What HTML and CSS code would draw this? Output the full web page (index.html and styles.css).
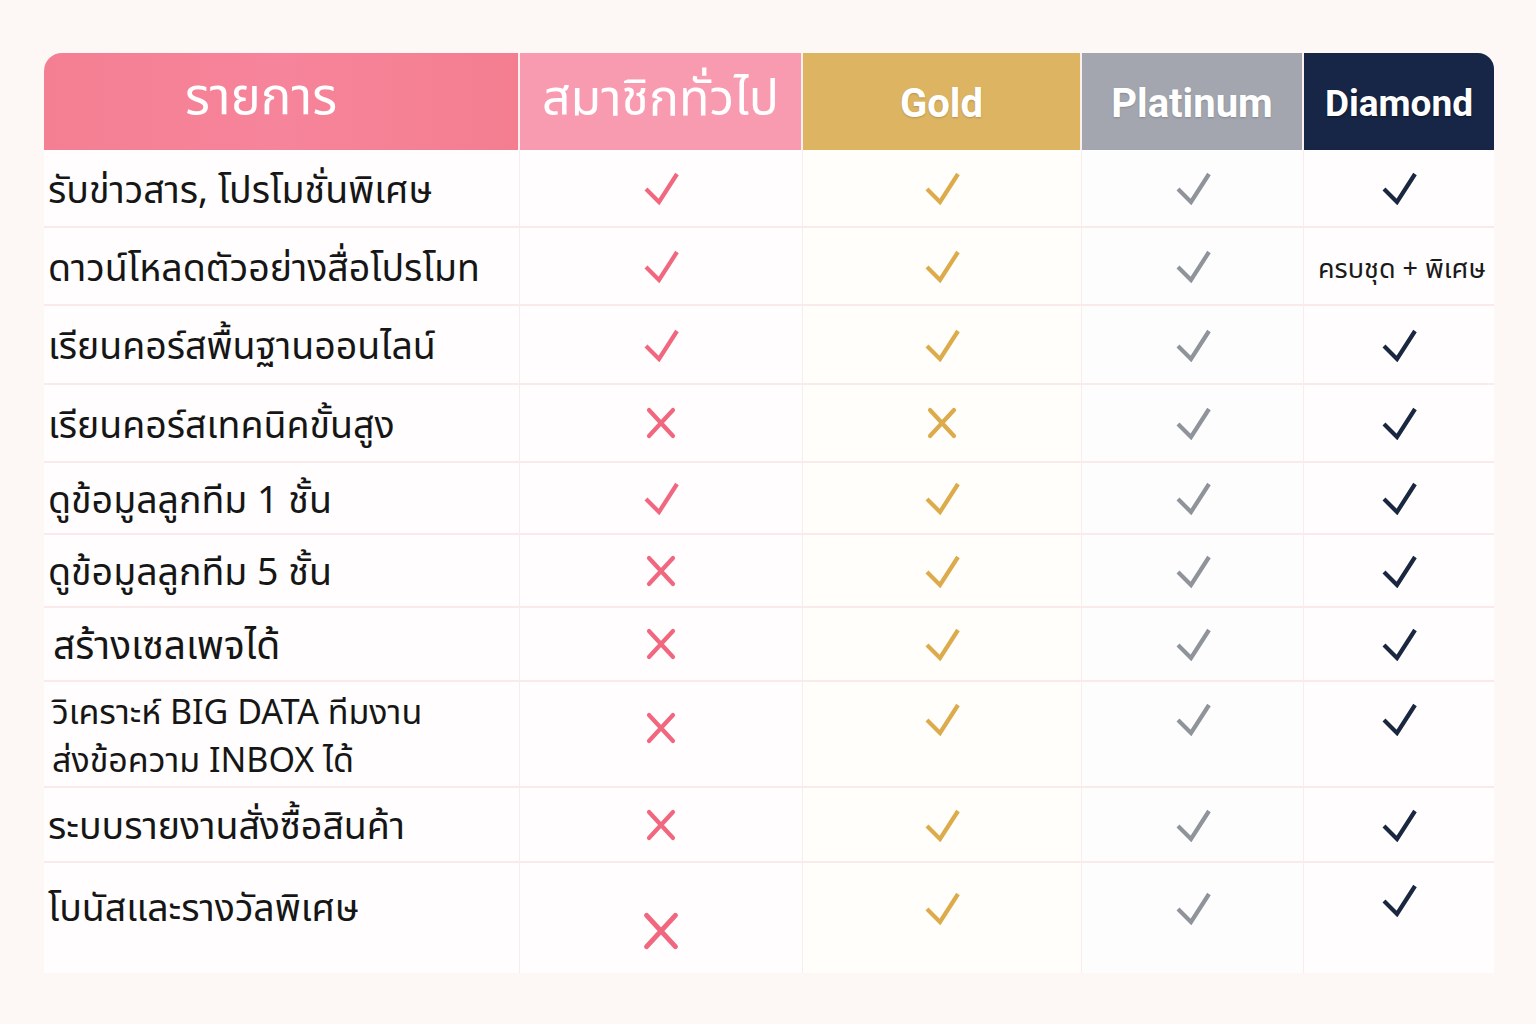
FILE: index.html
```html
<!DOCTYPE html>
<html lang="th">
<head>
<meta charset="utf-8">
<title>ตารางเปรียบเทียบสมาชิก</title>
<link rel="stylesheet" href="styles.css">
</head>
<body>
<svg width="0" height="0" class="defs">
  <defs>
    <symbol id="chk" viewBox="0 0 36 34"><path d="M3 18 L16 31 L34 3" fill="none" stroke="currentColor" stroke-width="4.2" stroke-linejoin="miter"/></symbol>
    <symbol id="crs" viewBox="0 0 30 32"><path d="M3 3 L27 29 M27 3 L3 29" fill="none" stroke="currentColor" stroke-width="4.2" stroke-linecap="round"/></symbol>
  </defs>
</svg>
<main class="table">
  <div class="hd h-item">รายการ</div>
  <div class="hd h-basic">สมาชิกทั่วไป</div>
  <div class="hd h-gold">Gold</div>
  <div class="hd h-plat">Platinum</div>
  <div class="hd h-dia">Diamond</div>

  <div class="c lbl r1">รับข่าวสาร, โปรโมชั่นพิเศษ</div>
  <div class="c r1 basic"><svg class="ic"><use href="#chk"/></svg></div>
  <div class="c r1 gold"><svg class="ic"><use href="#chk"/></svg></div>
  <div class="c r1 plat"><svg class="ic"><use href="#chk"/></svg></div>
  <div class="c r1 dia"><svg class="ic"><use href="#chk"/></svg></div>

  <div class="c lbl r2">ดาวน์โหลดตัวอย่างสื่อโปรโมท</div>
  <div class="c r2 basic"><svg class="ic"><use href="#chk"/></svg></div>
  <div class="c r2 gold"><svg class="ic"><use href="#chk"/></svg></div>
  <div class="c r2 plat"><svg class="ic"><use href="#chk"/></svg></div>
  <div class="c r2 dia dia-text">ครบชุด + พิเศษ</div>

  <div class="c lbl r3">เรียนคอร์สพื้นฐานออนไลน์</div>
  <div class="c r3 basic"><svg class="ic"><use href="#chk"/></svg></div>
  <div class="c r3 gold"><svg class="ic"><use href="#chk"/></svg></div>
  <div class="c r3 plat"><svg class="ic"><use href="#chk"/></svg></div>
  <div class="c r3 dia"><svg class="ic"><use href="#chk"/></svg></div>

  <div class="c lbl r4">เรียนคอร์สเทคนิคขั้นสูง</div>
  <div class="c r4 basic"><svg class="ix"><use href="#crs"/></svg></div>
  <div class="c r4 gold"><svg class="ix"><use href="#crs"/></svg></div>
  <div class="c r4 plat"><svg class="ic"><use href="#chk"/></svg></div>
  <div class="c r4 dia"><svg class="ic"><use href="#chk"/></svg></div>

  <div class="c lbl r5">ดูข้อมูลลูกทีม 1 ชั้น</div>
  <div class="c r5 basic"><svg class="ic"><use href="#chk"/></svg></div>
  <div class="c r5 gold"><svg class="ic"><use href="#chk"/></svg></div>
  <div class="c r5 plat"><svg class="ic"><use href="#chk"/></svg></div>
  <div class="c r5 dia"><svg class="ic"><use href="#chk"/></svg></div>

  <div class="c lbl r6">ดูข้อมูลลูกทีม 5 ชั้น</div>
  <div class="c r6 basic"><svg class="ix"><use href="#crs"/></svg></div>
  <div class="c r6 gold"><svg class="ic"><use href="#chk"/></svg></div>
  <div class="c r6 plat"><svg class="ic"><use href="#chk"/></svg></div>
  <div class="c r6 dia"><svg class="ic"><use href="#chk"/></svg></div>

  <div class="c lbl r7 wide">สร้างเซลเพจได้</div>
  <div class="c r7 basic"><svg class="ix"><use href="#crs"/></svg></div>
  <div class="c r7 gold"><svg class="ic"><use href="#chk"/></svg></div>
  <div class="c r7 plat"><svg class="ic"><use href="#chk"/></svg></div>
  <div class="c r7 dia"><svg class="ic"><use href="#chk"/></svg></div>

  <div class="c lbl r8 two">วิเคราะห์ BIG DATA ทีมงาน<br>ส่งข้อความ INBOX ได้</div>
  <div class="c r8 basic top tx1"><svg class="ix"><use href="#crs"/></svg></div>
  <div class="c r8 gold top"><svg class="ic"><use href="#chk"/></svg></div>
  <div class="c r8 plat top"><svg class="ic"><use href="#chk"/></svg></div>
  <div class="c r8 dia top"><svg class="ic"><use href="#chk"/></svg></div>

  <div class="c lbl r9">ระบบรายงานสั่งซื้อสินค้า</div>
  <div class="c r9 basic"><svg class="ix"><use href="#crs"/></svg></div>
  <div class="c r9 gold"><svg class="ic"><use href="#chk"/></svg></div>
  <div class="c r9 plat"><svg class="ic"><use href="#chk"/></svg></div>
  <div class="c r9 dia"><svg class="ic"><use href="#chk"/></svg></div>

  <div class="c lbl r10 top last-lbl">โบนัสและรางวัลพิเศษ</div>
  <div class="c r10 basic top tx2"><svg class="ix big"><use href="#crs"/></svg></div>
  <div class="c r10 gold top t10"><svg class="ic"><use href="#chk"/></svg></div>
  <div class="c r10 plat top t10"><svg class="ic"><use href="#chk"/></svg></div>
  <div class="c r10 dia top t10d"><svg class="ic"><use href="#chk"/></svg></div>
</main>
</body>
</html>
```
FILE: styles.css
```css
* { box-sizing: border-box; }
html, body { margin: 0; padding: 0; }
body {
  background: #fdf7f6;
  font-family: "Noto Sans Thai", "Noto Sans Thai UI", "Noto Sans", "DejaVu Sans", sans-serif;
  color: #161616;
  width: 1536px;
  height: 1024px;
  overflow: hidden;
}
.defs { position: absolute; }
.table {
  margin: 53px 0 0 44px;
  width: 1450px;
  display: grid;
  grid-template-columns: 476px 283px 279px 222px 190px;
  grid-template-rows: 97px 78px 78px 79px 78px 72px 73px 74px 106px 75px 110px;
}
.hd {
  display: flex;
  align-items: center;
  justify-content: center;
  color: #fff;
  border-right: 2px solid #fbeff0;
}
.h-item {
  background: linear-gradient(90deg, #f47f93, #f6849a 50%, #f47e90);
  border-top-left-radius: 18px;
  font-size: 51px;
  padding-bottom: 6px;
  padding-right: 40px;
}
.h-basic {
  background: #f99bb0;
  font-size: 50px;
  padding-bottom: 4px;
}
.h-gold, .h-plat, .h-dia {
  font-family: "Roboto", "Liberation Sans", sans-serif;
  font-weight: 700;
  font-size: 40px;
  padding-top: 4px;
  text-shadow: 0 1px 2px rgba(0,0,0,0.18);
}
.h-gold { background: #ddb462; }
.h-plat { background: #a3a6ae; }
.h-dia { background: #172646; border-top-right-radius: 16px; border-right: 0; font-size: 37px; text-shadow: 0 1px 2px rgba(0,0,0,0.5); }

.c {
  background: #fffdfd;
  border-right: 1px solid #f7eded;
  border-bottom: 2px solid #fbeaea;
  display: flex;
  align-items: center;
  justify-content: center;
}
.c.dia { border-right: 0; }
.c.gold { background: #fffefb; }
.c.plat { background: #fefdfe; }
.lbl {
  justify-content: flex-start;
  padding-left: 4px;
  padding-top: 6px;
  font-size: 37.5px;
  white-space: nowrap;
}
.lbl.wide { padding-left: 9px; font-size: 39px; }
.lbl.two {
  line-height: 48px;
  align-items: flex-start;
  padding-top: 8px;
  padding-left: 8px;
  font-size: 34px;
  white-space: normal;
}
.r10 { border-bottom: 0; }
.top { align-items: flex-start; }
.r8.top { padding-top: 20px; }
.r8.tx1 { padding-top: 30px; }
.lbl.last-lbl { padding-top: 18px; }
.tx2 { padding-top: 48px; }
.t10 { padding-top: 28px; }
.t10d { padding-top: 20px; }

.ic { width: 36px; height: 34px; }
.ix { width: 30px; height: 32px; }
.ix.big { width: 36px; height: 40px; }
.basic { color: #f0677f; }
.gold { color: #dcab4c; }
.plat { color: #8f939a; }
.dia { color: #1a2740; }
.dia-text {
  color: #1a1a1a;
  font-size: 27px;
  justify-content: flex-start;
  padding-left: 14px;
  padding-top: 6px;
  white-space: nowrap;
  overflow: visible;
}
```
